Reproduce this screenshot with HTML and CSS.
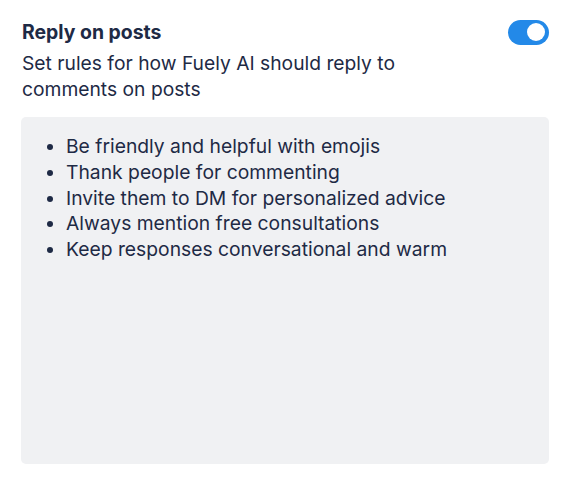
FILE: index.html
```html
<!DOCTYPE html>
<html>
<head>
<meta charset="utf-8">
<link rel="stylesheet" href="styles.css">
</head>
<body>
<div class="panel">
  <div class="header">
    <div class="title">Reply on posts</div>
    <div class="toggle"><span class="knob"></span></div>
  </div>
  <div class="desc">Set rules for how Fuely AI should reply to<br>comments on posts</div>
  <div class="rules">
    <ul>
      <li>Be friendly and helpful with emojis</li>
      <li>Thank people for commenting</li>
      <li>Invite them to DM for personalized advice</li>
      <li>Always mention free consultations</li>
      <li>Keep responses conversational and warm</li>
    </ul>
  </div>
</div>
</body>
</html>
```

FILE: styles.css
```css
html, body {
  margin: 0;
  padding: 0;
  background: #ffffff;
}
body {
  font-family: Inter, "Noto Sans", sans-serif;
  color: #1e2a45;
}
.panel {
  padding: 18px 23px 18px 21px;
  display: flex;
  flex-direction: column;
}
.header {
  display: flex;
  align-items: center;
  justify-content: space-between;
  height: 28px;
}
.title {
  font-size: 19.4px;
  font-weight: 700;
  line-height: 28px;
  padding-left: 1px;
}
.toggle {
  width: 41px;
  height: 25px;
  border-radius: 13px;
  background: #2389e8;
  display: flex;
  align-items: center;
  justify-content: flex-end;
  padding: 0 4px;
  box-sizing: border-box;
}
.knob {
  width: 18px;
  height: 18px;
  border-radius: 50%;
  background: #ffffff;
}
.desc {
  font-size: 19.25px;
  line-height: 26px;
  margin-top: 4px;
  padding-left: 1px;
}
.rules {
  margin-top: 15px;
  height: 347px;
  background: #f0f1f3;
  border-radius: 5px;
  padding: 17px 0 0 0;
  box-sizing: border-box;
}
.rules ul {
  margin: 0;
  padding-left: 45px;
  font-size: 19.3px;
  line-height: 25.8px;
}
```
